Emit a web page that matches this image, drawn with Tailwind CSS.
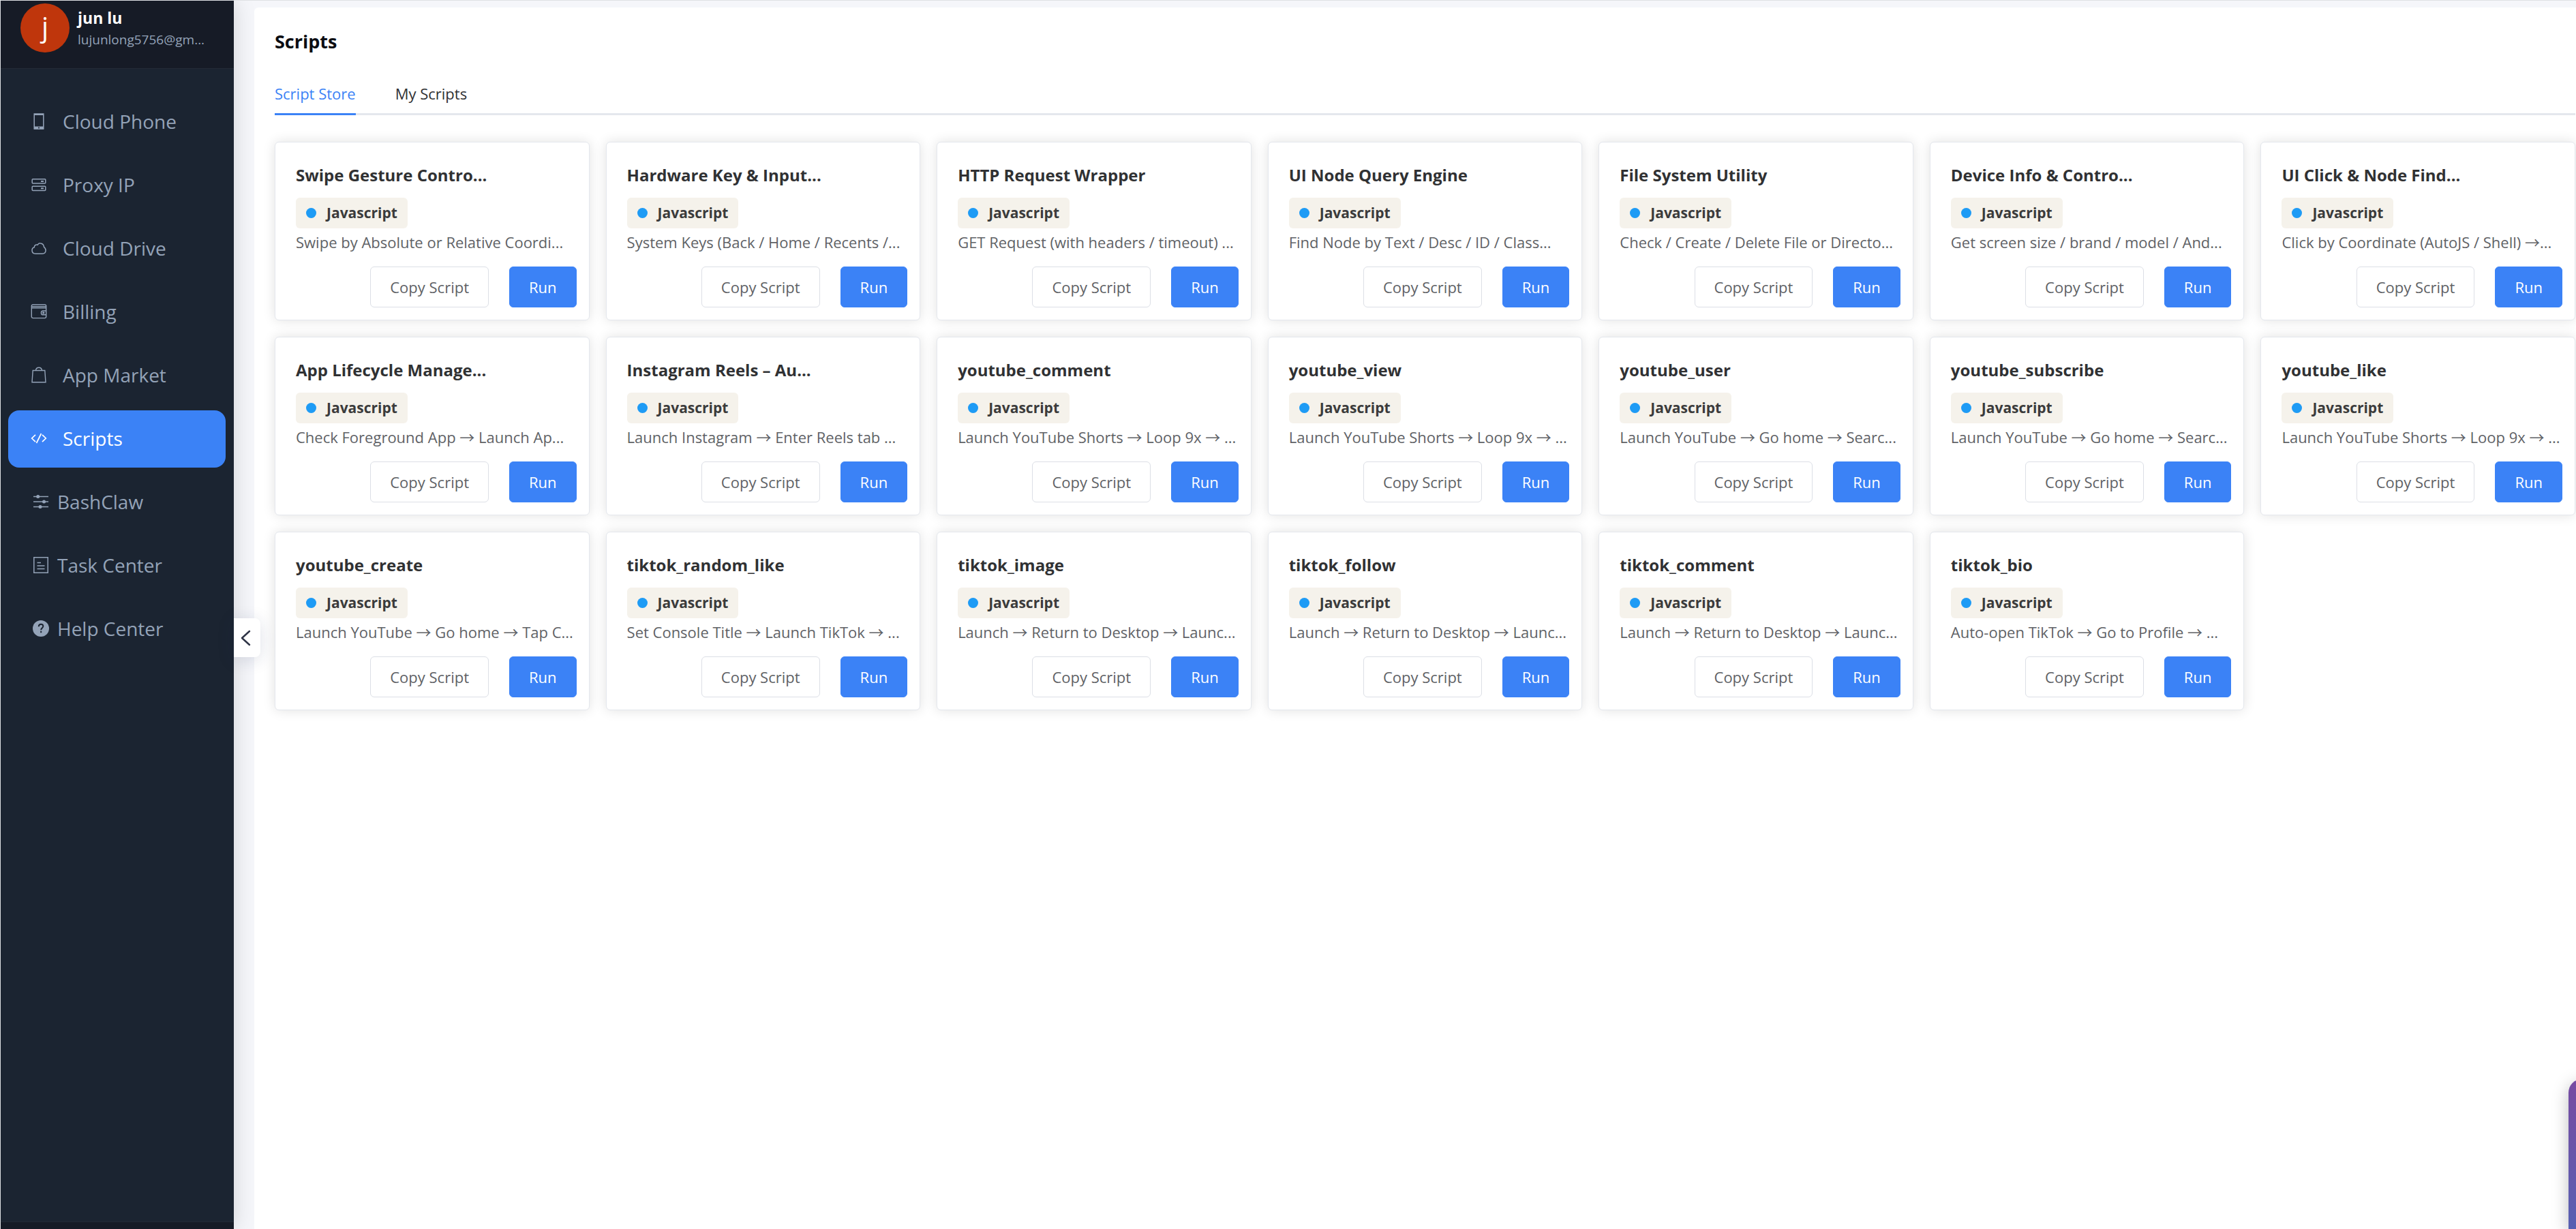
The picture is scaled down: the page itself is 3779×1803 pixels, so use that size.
<!DOCTYPE html>
<html lang="en">
<head>
    <meta charset="UTF-8">
    <meta name="viewport" content="width=device-width, initial-scale=1.0">
    <title>Scripts</title>
    <script src="https://cdn.jsdelivr.net/npm/@tailwindcss/browser@4"></script>
</head>
<body class="h-screen overflow-hidden flex bg-[#f5f6fa] border-t border-l border-[#dfe1e4] font-['Open_Sans','Noto_Sans_CJK_SC',sans-serif] text-[22px] text-[#303133]">
    <!-- Sidebar -->
    <aside class="relative z-10 w-[342px] shrink-0 flex flex-col bg-[#1b2431] text-[#94a3b8] shadow-[0_0_30px_rgba(0,0,0,0.15)]">
        <div class="h-[100px] shrink-0 flex gap-3 pl-[29px] pt-1 bg-[#161b26] border-b border-[#232a37]">
            <div class="size-[72px] shrink-0 rounded-full bg-[#bf360c] text-white text-[40px] leading-[68px] text-center">j</div>
            <div class="min-w-0 pt-1">
                <p class="text-white font-bold text-[23px] leading-[34px]">jun lu</p>
                <p class="text-[19px] leading-[30px]">lujunlong5756@gm...</p>
            </div>
        </div>
        <nav class="flex-1 flex flex-col gap-[9px] pl-[11px] pr-3 pt-9 text-[28px]">
            <a href="#" class="h-[84px] flex items-center gap-[23px] pl-[33px] pb-[2px] rounded-2xl">
                <svg class="size-6" viewBox="0 0 24 24" fill="none" stroke="currentColor" stroke-width="1.5"><path d="M5.2 1v22h13.6V1z"/><path d="M5 2h14" stroke-width="2"/><path d="M5 21.5h14" stroke-width="4"/><path d="M11.2 21.5h1.6" stroke="#1b2431" stroke-width="2"/></svg>
                Cloud Phone
            </a>
            <a href="#" class="h-[84px] flex items-center gap-[23px] pl-[33px] pb-[2px] rounded-2xl">
                <svg class="size-6" viewBox="0 0 24 24" fill="none" stroke="currentColor" stroke-width="1.5"><rect x="2.2" y="3.8" width="19.6" height="6.2" rx="1"/><rect x="2.2" y="14.2" width="19.6" height="6.2" rx="1"/><path d="M15 6.9h4M15 17.3h4" stroke-width="2"/></svg>
                Proxy IP
            </a>
            <a href="#" class="h-[84px] flex items-center gap-[23px] pl-[33px] pb-[2px] rounded-2xl">
                <svg class="size-6" viewBox="0 0 24 24" fill="none" stroke="currentColor" stroke-width="1.5"><path d="M7 20.2c-3.2 0-5-2.1-5-4.9 0-2.3 1.3-4 3.3-4.5C5.3 8 7.5 6.5 10 7.3 11.2 5.3 12.8 4.7 14.3 4.9c3 .3 5 2.6 5.2 5.4 1.8 1.4 2.7 3.2 2.6 5.2-.2 3-2.2 4.7-5 4.7z"/></svg>
                Cloud Drive
            </a>
            <a href="#" class="h-[84px] flex items-center gap-[23px] pl-[33px] pb-[2px] rounded-2xl">
                <svg class="size-6" viewBox="0 0 24 24" fill="none" stroke="currentColor" stroke-width="1.4"><rect x="1.3" y="2" width="21.4" height="19.6" rx="2"/><path d="M1.5 5h20.5" stroke-width="1.6"/><path d="M1.5 7h21" stroke-width="1.2"/><path d="M22.5 11H18.3a2.9 2.9 0 0 0 0 5.8h4.2"/><circle cx="18.8" cy="13.9" r="1" fill="currentColor"/></svg>
                Billing
            </a>
            <a href="#" class="h-[84px] flex items-center gap-[23px] pl-[33px] pb-[2px] rounded-2xl">
                <svg class="size-6" viewBox="0 0 24 24" fill="none" stroke="currentColor" stroke-width="1.4"><path d="M3.2 5.5h17.6l1.2 17.3H2z"/><path d="M7.5 5.5C7.7 2.5 9.5 1.2 12 1.2s4.3 1.3 4.5 4.3"/></svg>
                App Market
            </a>
            <a href="#" aria-current="page" class="h-[84px] flex items-center gap-[23px] pl-[33px] pb-[2px] rounded-2xl bg-[#3b82f6] text-white">
                <svg class="size-6" viewBox="0 0 24 24" fill="none" stroke="currentColor" stroke-width="1.7"><path d="M7 6.8 1.7 12 7 17.2M17 6.8l5.3 5.2-5.3 5.2M15.5 5 8.5 19"/></svg>
                Scripts
            </a>
            <a href="#" class="h-[84px] flex items-center gap-3 pl-9 pb-[2px] rounded-2xl">
                <svg class="size-6" viewBox="0 0 24 24" fill="none" stroke="currentColor" stroke-width="1.5"><path d="M1 4.5h22M1 12h22M1 19.5h22"/><g fill="currentColor" stroke="none"><circle cx="7.7" cy="4.5" r="2.5"/><circle cx="16.5" cy="12" r="2.5"/><circle cx="11" cy="19.5" r="2.5"/></g></svg>
                BashClaw
            </a>
            <a href="#" class="h-[84px] flex items-center gap-3 pl-9 pb-[2px] rounded-2xl">
                <svg class="size-6" viewBox="0 0 24 24" fill="none" stroke="currentColor" stroke-width="1.5"><path d="M1.8.8h20.4v22.4H1.8zM6.5 8.5h5.5M6.5 13h11M6.5 17.5h11"/></svg>
                Task Center
            </a>
            <a href="#" class="h-[84px] flex items-center gap-3 pl-9 pb-[2px] rounded-2xl">
                <svg class="size-6" viewBox="0 0 24 24" fill="none" stroke="#1b2431" stroke-width="2"><circle cx="12" cy="12" r="12" fill="#94a3b8" stroke="none"/><path d="M8.8 9.3c0-2.2 1.4-3.5 3.3-3.5s3.2 1.2 3.2 3c0 2.3-3.1 2.6-3.1 5.4M12.2 15.8v2.4"/></svg>
                Help Center
            </a>
        </nav>
        <div class="h-[11px] shrink-0 bg-[#161b26] border-t border-[#232a37]"></div>
        <button type="button" aria-label="Collapse sidebar" class="absolute left-full top-[906px] w-[39px] h-[57px] pr-[3px] flex items-center justify-center bg-white rounded-r-lg shadow-[0_4px_24px_rgba(30,41,90,0.15)]">
            <svg class="size-6" viewBox="0 0 24 24" fill="none" stroke="#2f3446" stroke-width="2.5" stroke-linecap="round" stroke-linejoin="round"><path d="M17 2 6 12l11 10"/></svg>
        </button>
    </aside>

    <!-- Content -->
    <main class="flex-1 min-w-0 ml-[30px] mt-[10px] pl-[30px] pr-px bg-white rounded-tl-md">
        <h1 class="pt-[30px] text-[27px] leading-[40px] font-bold text-[#0b0d12]">Scripts</h1>
        <div role="tablist" class="mt-[26px] flex gap-[58px] border-b-3 border-[#e4e7ed]">
            <button type="button" role="tab" aria-selected="true" class="h-[62px] pt-[2px] -mb-[3px] border-b-3 border-[#3b82f6] text-[#3b82f6]">Script Store</button>
            <button type="button" role="tab" aria-selected="false" class="h-[62px] pt-[2px] -mb-[3px] border-b-3 border-transparent">My Scripts</button>
        </div>
        <div id="scripts" class="mt-[39px] grid grid-cols-[repeat(auto-fill,minmax(440px,1fr))] gap-6"></div>
    </main>

    <!-- Chat widget peeking in from the right -->
    <div class="fixed left-[calc(100%-11px)] bottom-0 w-[60px] h-[220px] rounded-tl-[20px] bg-linear-to-b from-[#764ba2] to-[#5760b2] shadow-[0_6px_24px_rgba(0,0,0,0.25)]"></div>

    <script>
        const scripts = [
            ["Swipe Gesture Contro...", "Swipe by Absolute or Relative Coordi..."],
            ["Hardware Key & Input...", "System Keys (Back / Home / Recents /..."],
            ["HTTP Request Wrapper", "GET Request (with headers / timeout) ..."],
            ["UI Node Query Engine", "Find Node by Text / Desc / ID / Class..."],
            ["File System Utility", "Check / Create / Delete File or Directo..."],
            ["Device Info & Contro...", "Get screen size / brand / model / And..."],
            ["UI Click & Node Find...", "Click by Coordinate (AutoJS / Shell) →..."],
            ["App Lifecycle Manage...", "Check Foreground App → Launch Ap..."],
            ["Instagram Reels – Au...", "Launch Instagram → Enter Reels tab ..."],
            ["youtube_comment", "Launch YouTube Shorts → Loop 9x → ..."],
            ["youtube_view", "Launch YouTube Shorts → Loop 9x → ..."],
            ["youtube_user", "Launch YouTube → Go home → Searc..."],
            ["youtube_subscribe", "Launch YouTube → Go home → Searc..."],
            ["youtube_like", "Launch YouTube Shorts → Loop 9x → ..."],
            ["youtube_create", "Launch YouTube → Go home → Tap C..."],
            ["tiktok_random_like", "Set Console Title → Launch TikTok → ..."],
            ["tiktok_image", "Launch → Return to Desktop → Launc..."],
            ["tiktok_follow", "Launch → Return to Desktop → Launc..."],
            ["tiktok_comment", "Launch → Return to Desktop → Launc..."],
            ["tiktok_bio", "Auto-open TikTok → Go to Profile → ..."]
        ];

        const grid = document.getElementById('scripts');
        scripts.forEach(([name, desc]) => {
            const card = document.createElement('article');
            card.className = 'min-w-0 bg-white border border-[#e4e7ed] rounded-md pl-[30px] pr-[18px] pt-[31px] pb-[18px] shadow-[0_0_18px_rgba(0,0,0,0.12)]';
            card.innerHTML = `
                <h2 class="text-[24px] leading-[34px] font-bold whitespace-nowrap"></h2>
                <div class="mt-4 h-[45px] w-fit flex items-center gap-[15px] px-[15px] rounded-md bg-[#f5f2eb] text-[21px] font-bold text-[#3b3b3b]">
                    <span class="size-[15px] rounded-full bg-[#1e9bf5]"></span>Javascript
                </div>
                <p class="mt-[3px] h-[35px] leading-[34px] text-[#606266] whitespace-nowrap"></p>
                <div class="mt-[18px] flex justify-end gap-[30px]">
                    <button type="button" class="h-[60px] px-7 border border-[#dcdfe6] rounded-md text-[#606266]">Copy Script</button>
                    <button type="button" class="h-[60px] px-7 border border-[#3b82f6] rounded-md bg-[#3b82f6] text-white">Run</button>
                </div>`;
            card.querySelector('h2').textContent = name;
            card.querySelector('p').textContent = desc;
            grid.appendChild(card);
        });
    </script>
</body>
</html>
